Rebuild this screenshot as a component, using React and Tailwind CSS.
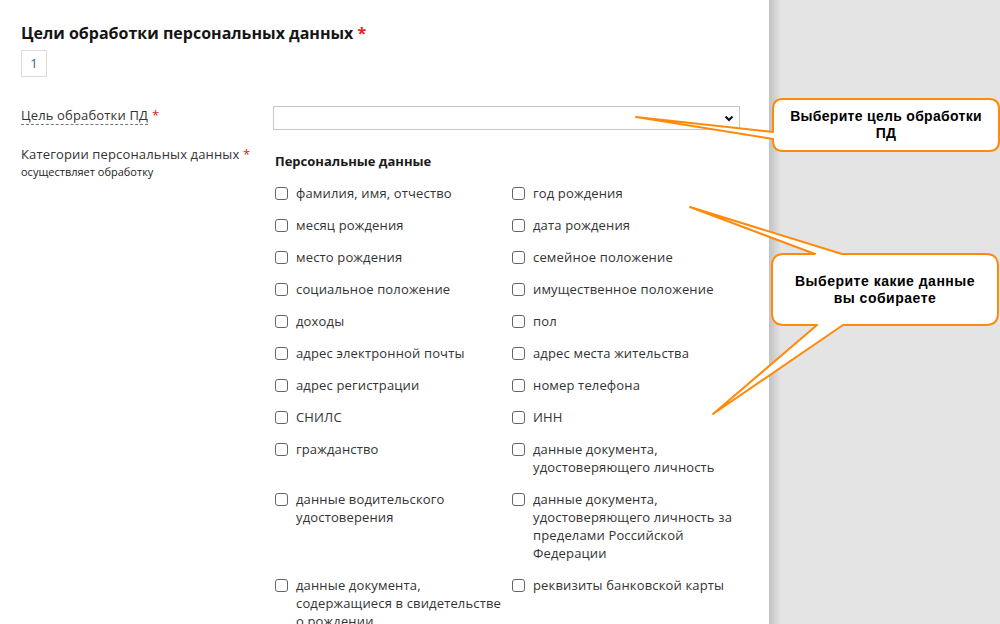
import React from "react";

const left = [
  "фамилия, имя, отчество",
  "месяц рождения",
  "место рождения",
  "социальное положение",
  "доходы",
  "адрес электронной почты",
  "адрес регистрации",
  "СНИЛС",
  "гражданство",
  "данные водительского удостоверения",
  "данные документа, содержащиеся в свидетельстве о рождении",
];
const right = [
  "год рождения",
  "дата рождения",
  "семейное положение",
  "имущественное положение",
  "пол",
  "адрес места жительства",
  "номер телефона",
  "ИНН",
  "данные документа, удостоверяющего личность",
  "данные документа, удостоверяющего личность за пределами Российской Федерации",
  "реквизиты банковской карты",
];

function Check({ label, padRight }) {
  return (
    <label className="flex items-start">
      <input
        type="checkbox"
        className="mt-[3px] h-[13px] w-[13px] shrink-0 appearance-none rounded-[3px] border border-[#666] bg-white"
      />
      <span className={"ml-[8px] leading-[18px] " + (padRight ? "pr-[6px]" : "")}>{label}</span>
    </label>
  );
}

export default function App() {
  const items = [];
  for (let i = 0; i < left.length; i++) {
    items.push(<Check key={"l" + i} label={left[i]} padRight />);
    items.push(<Check key={"r" + i} label={right[i]} />);
  }
  return (
    <div className="relative flex min-h-screen bg-[#e4e4e4] font-['Open_Sans',sans-serif]">
      <main className="w-[769px] shrink-0 bg-white pb-10 pl-[21px] pr-[29px] pt-[22px] text-[13px] tracking-[0.15px] text-[#333]">
        <h2 className="text-[16px] font-bold leading-[22px] tracking-normal text-[#151515]">
          Цели обработки персональных данных <span className="text-[#e0201b]">*</span>
        </h2>
        <div className="mt-[6px] flex h-[27px] w-[26px] items-center justify-center border border-[#dcdcdc] text-[13px] text-[#35638f]">
          1
        </div>

        <div className="mt-[29px] flex">
          <div className="w-[252px] shrink-0">
            <span className="inline-block border-b border-dashed border-[#777] leading-[18px]">Цель обработки ПД</span>
            <span className="ml-[4px] text-[#e0201b]">*</span>
          </div>
          <div className="flex h-[24px] flex-1 items-center justify-end border border-[#c8c8c8] pr-[5px]">
            <svg width="10" height="7" viewBox="0 0 10 7">
              <polyline points="1.5,1.5 5,5 8.5,1.5" fill="none" stroke="#111" strokeWidth="2.2" />
            </svg>
          </div>
        </div>

        <div className="mt-[15px] flex">
          <div className="w-[252px] shrink-0">
            <div className="leading-[18px]">
              Категории персональных данных <span className="text-[#e0201b]">*</span>
            </div>
            <div className="text-[11px] leading-[18px] tracking-normal text-[#222]">осуществляет обработку</div>
          </div>
          <div className="flex-1 pl-[2px] pt-[7px]">
            <div className="font-bold leading-[18px] tracking-normal text-[#1a1a1a]">Персональные данные</div>
            <div className="mt-[14px] grid grid-cols-[237px_1fr] gap-y-[14px]">{items}</div>
          </div>
        </div>
      </main>
      <div className="w-[12px] shrink-0 bg-linear-to-r from-[#c2c2c2] to-[#e4e4e4]" />
      <div className="flex-1" />

      <svg
        className="pointer-events-none absolute left-0 top-0"
        width="1000"
        height="624"
        viewBox="0 0 1000 624"
      >
        <path
          d="M783,99 H989 Q999,99 999,109 V141 Q999,151 989,151 H783 Q773,151 773,141 V139 L636,117 L773,132 V109 Q773,99 783,99 Z"
          fill="#fff"
          stroke="#ff8a0a"
          strokeWidth="2"
          strokeLinejoin="round"
        />
        <path
          d="M784,254 H815 L690,207 L842,254 H986 Q998,254 998,266 V313 Q998,325 986,325 H843 L713,414 L817,325 H784 Q772,325 772,313 V266 Q772,254 784,254 Z"
          fill="#fff"
          stroke="#ff8a0a"
          strokeWidth="2"
          strokeLinejoin="round"
        />
      </svg>
      <div className="absolute left-[773px] top-[99px] flex h-[52px] w-[226px] items-center justify-center text-center font-['Liberation_Sans',Arial,sans-serif] text-[14px] font-bold leading-[17px] tracking-[0.3px] text-black">
        Выберите цель обработки
        <br />
        ПД
      </div>
      <div className="absolute left-[772px] top-[254px] flex h-[71px] w-[226px] items-center justify-center text-center font-['Liberation_Sans',Arial,sans-serif] text-[14px] font-bold leading-[17px] tracking-[0.5px] text-black">
        Выберите какие данные
        <br />
        вы собираете
      </div>
    </div>
  );
}
